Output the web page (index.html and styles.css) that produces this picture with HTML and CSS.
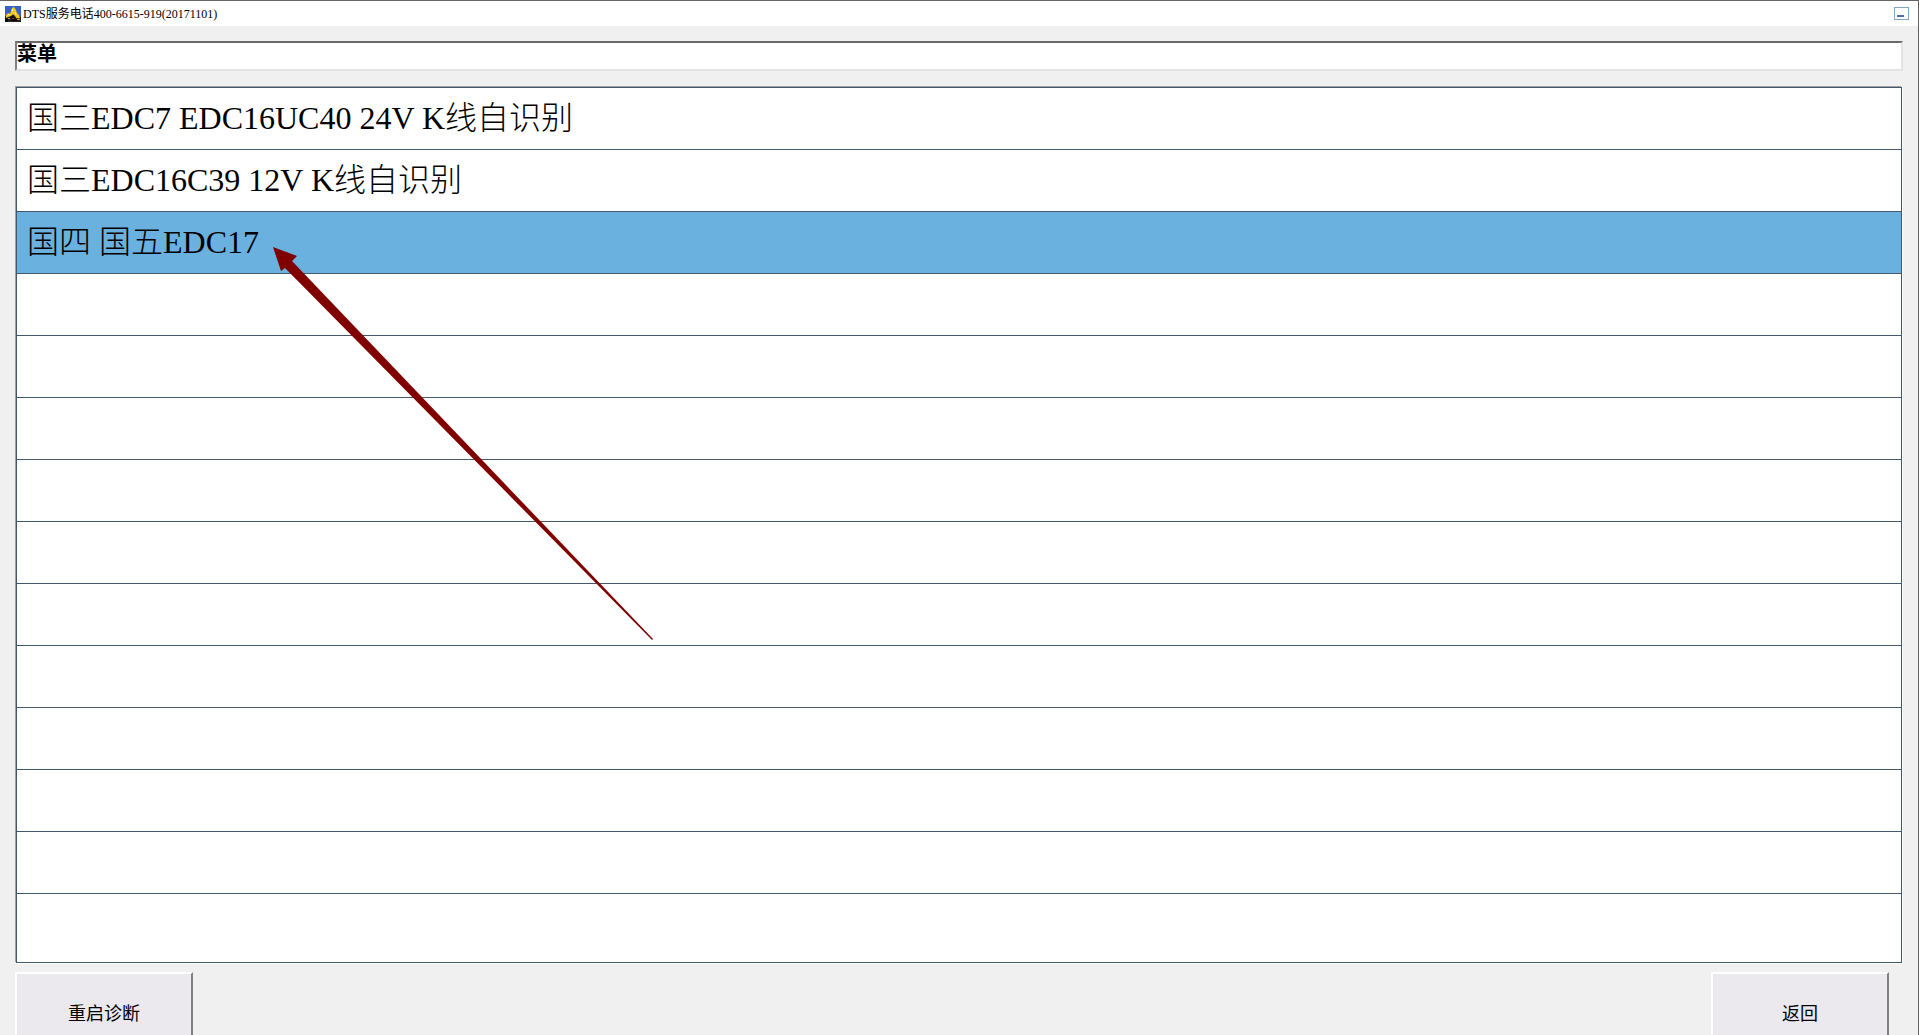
FILE: index.html
```html
<!DOCTYPE html>
<html lang="zh-CN">
<head>
  <meta charset="UTF-8">
  <title>DTS服务电话400-6615-919(20171101)</title>
  <link rel="stylesheet" href="styles.css">
</head>
<body>

  <div class="window">
    <header class="titlebar">
      <svg class="app-icon" viewBox="0 0 16 16" aria-hidden="true">
        <rect width="16" height="16" fill="#3163c8"/>
        <path d="M0 10h3l2-1h8l3 2v5H0z" fill="#23241c"/>
        <path d="M1 9l2-2 2 1 2-6 2-1 2 3 1 3 2 2 1 3-3 1-2-3-2-2-2 2-3 1-2 1z" fill="#f4c81e"/>
        <path d="M7 3h1v2H7zM10 6h1v2h-1zM3 8h2v1H3z" fill="#fff3a0"/>
        <path d="M5 11l3-1 3 3 2-1 1 2-3 1H6zM0 12l3 1v3H0z" fill="#0c0a08"/>
        <path d="M3 12h2v1H3zM12 13h3v1h-3z" fill="#c9a020"/>
        <path d="M7 12h2v1H7z" fill="#9c3a20"/>
      </svg>
      <span class="title">DTS服务电话400-6615-919(20171101)</span>
      <button type="button" class="minimize" aria-label="最小化"></button>
    </header>

    <main class="content">
      <input type="text" class="path" value="菜单" aria-label="当前位置" readonly>

      <ul class="menu">
        <li><button type="button">国三EDC7 EDC16UC40 24V K线自识别</button></li>
        <li><button type="button">国三EDC16C39 12V K线自识别</button></li>
        <li class="selected"><button type="button">国四 国五EDC17</button></li>
        <li></li>
        <li></li>
        <li></li>
        <li></li>
        <li></li>
        <li></li>
        <li></li>
        <li></li>
        <li></li>
        <li></li>
        <li></li>
      </ul>

      <div class="actions">
        <button type="button">重启诊断</button>
        <button type="button">返回</button>
      </div>
    </main>

    <svg class="pointer" viewBox="0 0 380 393" aria-hidden="true">
      <path d="M0 0L24 9L19 14L380 392L379 393L12 21L8 24Z" fill="#800000"/>
    </svg>
  </div>

</body>
</html>
```

FILE: styles.css
```css
* {
  box-sizing: border-box;
}

body {
  margin: 0;
  background: #f0f0f0;
  color: #000;
  font-family: "Liberation Serif", "Noto Sans CJK SC", serif;
}

button, input {
  font-family: inherit;
  color: inherit;
  border-radius: 0;
}

.window {
  position: relative;
  height: 100vh;
  overflow: hidden;
  border-top: 1px solid #646464;
  border-right: 1px solid #646464;
}

/* title bar */
.titlebar {
  display: flex;
  align-items: center;
  height: 25px;
  padding: 0 9px 0 5px;
  background: #fff;
}

.app-icon {
  width: 16px;
  height: 16px;
}

.title {
  margin-left: 2px;
  font-size: 12px;
  line-height: 16px;
}

.minimize {
  display: flex;
  align-items: flex-end;
  width: 15px;
  height: 13px;
  margin-left: auto;
  padding: 2px;
  border: 1px solid #7fa8c4;
  background: #fff;
}

.minimize::before {
  content: "";
  width: 7px;
  height: 2px;
  background: #4a6ea9;
}

/* main area */
.content {
  padding: 15px 15px 0;
}

.path {
  display: block;
  width: 100%;
  height: 30px;
  padding: 0 0 8px;
  border: 2px solid;
  border-color: #696969 #e3e3e3 #e3e3e3 #808080;
  background: #fff;
  font-size: 20px;
  font-weight: bold;
}

.menu {
  margin: 16px 1px 9px;
  padding: 0;
  list-style: none;
  background: #fff;
  border: 1px solid #43586a;
  box-shadow: -1px -1px 0 #a0a0a0, 1px 1px 0 #fff;
}

.menu li {
  height: 62px;
  border-bottom: 1px solid #43586a;
}

.menu li:last-child {
  height: 68px;
  border-bottom: none;
}

.menu button {
  display: block;
  width: 100%;
  height: 100%;
  padding: 0 10px 2px;
  border: none;
  background: transparent;
  font-size: 32px;
  font-weight: 300;
  line-height: 48px;
  text-align: left;
}

.menu .selected {
  background: #6bb1df;
}

/* bottom buttons */
.actions {
  display: flex;
  justify-content: space-between;
  padding-right: 14px;
}

.actions button {
  width: 178px;
  height: 80px;
  border: 2px solid;
  border-color: #fff #808080 #808080 #fff;
  background: #ebe8ee;
  font-size: 18px;
}

/* arrow drawn over the list */
.pointer {
  position: absolute;
  left: 273px;
  top: 246px;
  width: 380px;
  height: 393px;
  pointer-events: none;
}
```
